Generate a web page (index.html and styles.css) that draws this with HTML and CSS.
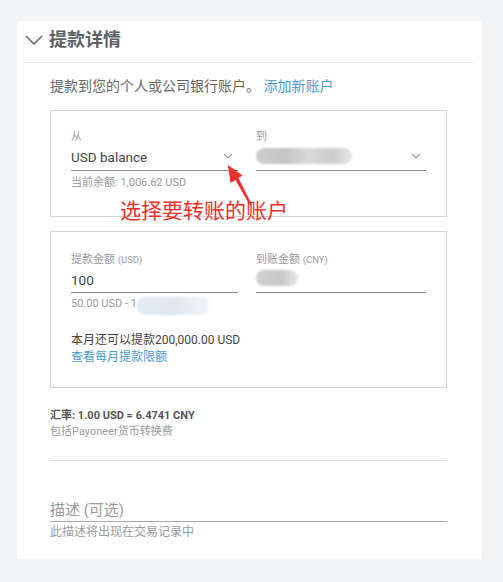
FILE: index.html
```html
<!DOCTYPE html>
<html lang="zh-CN">
<head>
<meta charset="utf-8">
<title>提款详情</title>
<link rel="stylesheet" href="styles.css">
</head>
<body>
<div class="page">
  <section class="panel">
    <header class="panel-head">
      <svg class="head-chev" width="18" height="10" viewBox="0 0 18 10"><path d="M1 1 L9 9 L17 1" fill="none" stroke="#6a6f76" stroke-width="1.6"/></svg>
      <h2 class="title">提款详情</h2>
    </header>
    <div class="panel-body">
      <p class="intro">提款到您的个人或公司银行账户。 <a class="link" href="#">添加新账户</a></p>

      <div class="box box-accounts">
        <div class="fields">
          <div class="field">
            <div class="label">从</div>
            <div class="control">
              <span class="value">USD balance</span>
              <svg class="sel-chev" width="10" height="6" viewBox="0 0 10 6"><path d="M1 1 L5 5 L9 1" fill="none" stroke="#9a9a9a" stroke-width="1.2"/></svg>
            </div>
            <div class="hint">当前余额: 1,006.62 USD</div>
          </div>
          <div class="field">
            <div class="label">到</div>
            <div class="control">
              <span class="blob blob-account"></span>
              <svg class="sel-chev" width="10" height="6" viewBox="0 0 10 6"><path d="M1 1 L5 5 L9 1" fill="none" stroke="#9a9a9a" stroke-width="1.2"/></svg>
            </div>
          </div>
        </div>
      </div>

      <div class="box box-amount">
        <div class="fields">
          <div class="field">
            <div class="label">提款金额 <span class="unit">(USD)</span></div>
            <div class="control control-amount"><span class="value">100</span></div>
            <div class="hint hint-range">50.00 USD - 1<span class="blob blob-range"></span></div>
          </div>
          <div class="field">
            <div class="label">到账金额 <span class="unit">(CNY)</span></div>
            <div class="control control-amount"><span class="blob blob-cny"></span></div>
          </div>
        </div>
        <p class="limit">本月还可以提款200,000.00 USD</p>
        <a class="link small-link" href="#">查看每月提款限额</a>
      </div>

      <div class="rate">
        <p class="rate-main">汇率: 1.00 USD = 6.4741 CNY</p>
        <p class="rate-sub">包括Payoneer货币转换费</p>
      </div>

      <div class="divider"></div>

      <div class="desc">
        <div class="control control-desc"><span class="placeholder">描述 (可选)</span></div>
        <div class="hint">此描述将出现在交易记录中</div>
      </div>
    </div>

    <div class="note">选择要转账的账户</div>
    <svg class="note-arrow" width="40" height="60" viewBox="0 0 40 60">
      <polygon points="8,5 22.5,15.5 18.5,18 32,45 30.2,46 15.5,20 10.5,23" fill="#ee2f2a"/>
    </svg>
  </section>
</div>
</body>
</html>
```

FILE: styles.css
```css
* { box-sizing: border-box; }

html, body {
  margin: 0;
  padding: 0;
  background: #f3f4f6;
  font-family: Roboto, "Noto Sans CJK SC", sans-serif;
  color: #444;
}

.page {
  padding: 21px 0 0 17px;
}

.panel {
  position: relative;
  width: 465px;
  background: #fff;
  box-shadow: 0 1px 3px rgba(0, 0, 0, 0.06);
  padding-bottom: 20px;
}

.panel-head {
  display: flex;
  align-items: center;
  height: 42px;
  margin: 0 9px 0 7px;
  padding: 0 0 4px 1px;
  border-bottom: 1px solid #e5e6e8;
}

.head-chev {
  display: block;
  margin-right: 6px;
  margin-top: 1px;
}

.title {
  margin: 0;
  font-size: 18px;
  font-weight: 700;
  color: #5c6169;
  line-height: 24px;
}

.panel-body {
  padding: 0 35px 0 33px;
}

.intro {
  margin: 13px 0 0;
  font-size: 14px;
  line-height: 20px;
  color: #666;
}

.link {
  color: #4b9bd2;
  text-decoration: none;
}

.box {
  border: 1px solid #d4d4d4;
  padding: 0 20px;
}

.box-accounts {
  margin-top: 14px;
  height: 107px;
  padding-top: 19px;
}

.box-amount {
  margin-top: 14px;
  padding-top: 21px;
  padding-bottom: 21px;
}

.fields {
  display: grid;
  grid-template-columns: 167px 170px;
  column-gap: 18px;
  align-items: start;
}

.label {
  font-size: 11px;
  line-height: 14px;
  color: #9a9a9a;
}

.unit {
  font-size: 9.5px;
}

.control {
  display: flex;
  align-items: center;
  justify-content: space-between;
  height: 27px;
  border-bottom: 1px solid #8a8a8a;
}

.control-amount {
  height: 26px;
}

.value {
  font-size: 13.5px;
  color: #444;
}

.sel-chev {
  display: block;
  margin-right: 5px;
  margin-top: -2px;
}

.hint {
  margin-top: 5px;
  font-size: 11px;
  line-height: 14px;
  color: #9a9a9a;
}

.hint-range {
  margin-top: 4px;
  height: 14px;
  display: flex;
  align-items: center;
}

.blob {
  display: inline-block;
  border-radius: 8px;
  filter: blur(1px);
}

.blob-account {
  width: 96px;
  height: 16px;
  margin-top: -3px;
  background: linear-gradient(90deg, #cfcfcf 0%, #c4c4c4 30%, #dadada 55%, #cdcdcd 80%, #e6e6e6 100%);
}

.blob-cny {
  width: 42px;
  height: 16px;
  margin-top: -4px;
  background: linear-gradient(90deg, #d0d0d0 0%, #c8c8c8 60%, #e8e8e8 100%);
}

.blob-range {
  flex: none;
  width: 72px;
  height: 18px;
  margin: 2px 0 -2px;
  background: linear-gradient(90deg, #e4ecf3 0%, #dfe6ee 50%, #e8eef4 75%, #f2f5f8 100%);
}

.limit {
  margin: 21px 0 0;
  font-size: 12px;
  line-height: 17px;
  color: #444;
}

.small-link {
  display: block;
  font-size: 12px;
  line-height: 17px;
}

.rate {
  margin-top: 20px;
}

.rate p {
  margin: 0;
  font-size: 11px;
  line-height: 16px;
}

.rate-main {
  font-weight: 700;
  color: #555;
}

.rate-sub {
  color: #999;
}

.divider {
  margin-top: 20px;
  border-top: 1px solid #dcdcdc;
}

.desc {
  margin-top: 34px;
}

.control-desc {
  height: 27px;
  border-bottom: 1.5px solid #a8a8a8;
}

.placeholder {
  font-size: 15px;
  color: #9a9a9a;
}

.desc .hint {
  margin-top: 3px;
  font-size: 12px;
}

.note {
  position: absolute;
  left: 103px;
  top: 178px;
  font-size: 21px;
  line-height: 24px;
  color: #ee2f2a;
  white-space: nowrap;
}

.note-arrow {
  position: absolute;
  left: 203px;
  top: 139px;
}
```
